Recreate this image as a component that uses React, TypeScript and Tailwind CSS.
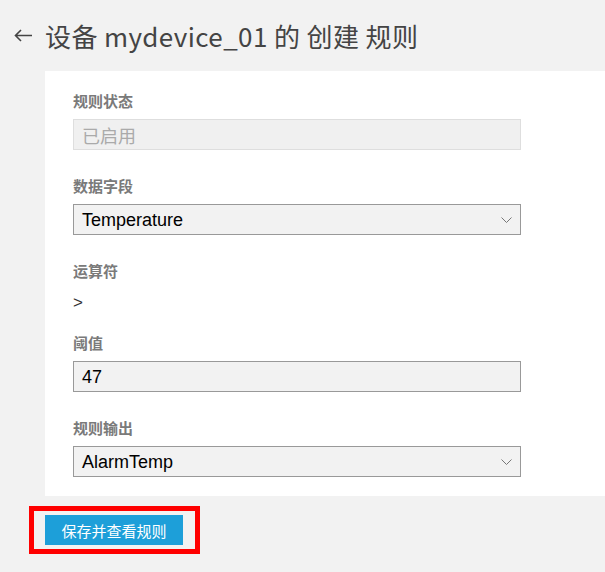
import React from "react";

const cjk = '"Noto Sans CJK SC", "Noto Sans", sans-serif';
const arial = '"Liberation Sans", "Noto Sans CJK SC", Arial, sans-serif';

function Label({ children }: { children: React.ReactNode }) {
  return (
    <div className="h-5 mb-2 text-[15px] leading-5 font-bold text-[#7a7a7a]" style={{ fontFamily: cjk }}>
      {children}
    </div>
  );
}

function Chevron() {
  return (
    <svg width="11" height="6" viewBox="0 0 11 6" className="text-[#777]">
      <path d="M0.5 0.5 L5.5 5.5 L10.5 0.5" fill="none" stroke="currentColor" strokeWidth="1" />
    </svg>
  );
}

function SelectBox({ value }: { value: string }) {
  return (
    <div className="w-[448px] h-[31px] border border-[#999] bg-[#f2f2f2] flex items-center justify-between pl-2 pr-[8px]">
      <span className="text-[18px] text-black leading-none" style={{ fontFamily: arial }}>{value}</span>
      <Chevron />
    </div>
  );
}

export default function App() {
  return (
    <div className="w-[605px] h-[572px] bg-[#f2f2f2] overflow-hidden">
      {/* 标题 */}
      <div className="h-[71px] flex items-center pl-[14px] gap-[12px]">
        <svg width="19" height="13" viewBox="0 0 19 13" className="text-[#444]">
          <path d="M18 6.5 H1.5 M7 1 L1.5 6.5 L7 12" fill="none" stroke="currentColor" strokeWidth="1.6" />
        </svg>
        <h1 className="text-[26px] tracking-[0.4px] text-[#444] font-normal leading-none" style={{ fontFamily: cjk }}>
          设备 mydevice_01 的 创建 规则
        </h1>
      </div>

      {/* 表单面板 */}
      <div className="ml-[45px] bg-white pl-[28px] pt-5 pb-[19px]">
        <Label>规则状态</Label>
        <div className="w-[448px] h-[31px] border border-[#dedede] bg-[#f0f0f0] flex items-center pl-2">
          <span className="text-[18px] text-[#aaa] leading-none" style={{ fontFamily: cjk }}>已启用</span>
        </div>

        <div className="mt-[26px]">
          <Label>数据字段</Label>
          <SelectBox value="Temperature" />
        </div>

        <div className="mt-[26px]">
          <Label>运算符</Label>
          <div className="h-[28px] flex items-center text-[17px] text-[#333]" style={{ fontFamily: arial }}>&gt;</div>
        </div>

        <div className="mt-[16px]">
          <Label>阈值</Label>
          <div className="w-[448px] h-[31px] border border-[#999] bg-[#f2f2f2] flex items-center pl-2">
            <span className="text-[18px] text-black leading-none" style={{ fontFamily: arial }}>47</span>
          </div>
        </div>

        <div className="mt-[26px]">
          <Label>规则输出</Label>
          <SelectBox value="AlarmTemp" />
        </div>
      </div>

      {/* 保存按钮 */}
      <div className="ml-[29px] mt-[10px] inline-flex border-[5px] border-[#ff0000] pl-[11px] pr-[12px] py-[4px]">
        <button
          className="w-[138px] h-[30px] bg-[#1d9fd9] text-white text-[15px] leading-none"
          style={{ fontFamily: cjk }}
        >
          保存并查看规则
        </button>
      </div>
    </div>
  );
}
